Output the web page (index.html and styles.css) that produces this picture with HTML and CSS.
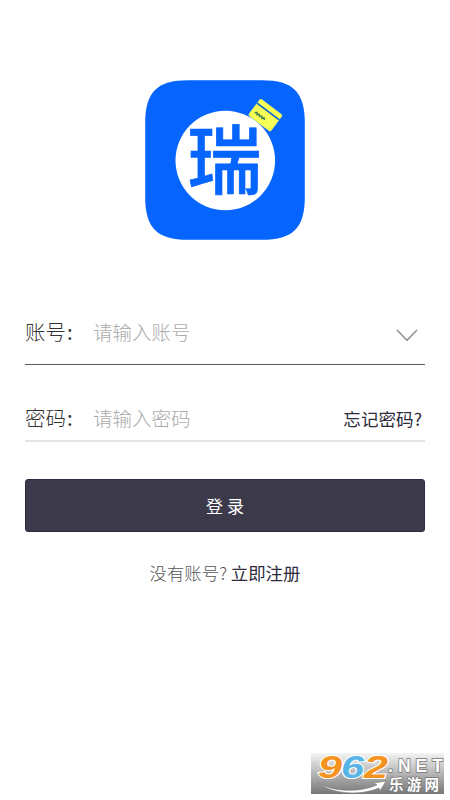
FILE: index.html
```
<!DOCTYPE html>
<html lang="zh-CN">
<head>
<meta charset="utf-8">
<title>登录</title>
<link rel="stylesheet" href="styles.css">
</head>
<body>
<main class="screen">
  <svg class="logo" viewBox="0 0 160 160" role="img" aria-label="瑞">
    <path class="logo-bg" d="M43 0.2H117C148 0.2 159.8 12 159.8 43V117C159.8 148 148 159.8 117 159.8H43C12 159.8 0.2 148 0.2 117V43C0.2 12 12 0.2 43 0.2Z"/>
    <circle cx="80.3" cy="80.5" r="49.8" fill="#fff"/>
    <g transform="translate(115.5 18.4) rotate(37)">
      <rect width="28" height="21" rx="2" fill="#f6ff55"/>
      <path d="M0 5.8H28" stroke="#0862d8" stroke-width="1.6"/>
      <path d="M4 15L5.6 13.4L7 15L8.6 13.4L10 15L11.6 13.4L13 15L14.6 13.4L16 15" fill="none" stroke="#43804e" stroke-width="1.5"/>
    </g>
    <text class="logo-text" x="79.6" y="107.5" text-anchor="middle">瑞</text>
  </svg>

  <form class="form">
    <div class="field field-account">
      <span class="label">账号<span class="colon">:</span></span>
      <span class="hint">请输入账号</span>
      <svg class="chevron" viewBox="0 0 22 13"><path d="M1 1L11 11.3L21 1"/></svg>
    </div>
    <div class="field field-password">
      <span class="label">密码<span class="colon">:</span></span>
      <span class="hint">请输入密码</span>
      <a class="forgot">忘记密码?</a>
    </div>
    <button class="submit" type="button">登 录</button>
    <p class="register">没有账号? <a class="register-link">立即注册</a></p>
  </form>

  <div class="badge">
    <svg viewBox="0 0 133 41">
      <defs>
        <linearGradient id="shade" x2="0" y2="1">
          <stop offset="0" stop-color="#f4f4f4"/>
          <stop offset="1" stop-color="#777"/>
        </linearGradient>
      </defs>
      <rect width="133" height="41" fill="url(#shade)"/>
      <path class="swoosh" d="M6 29C20 39 48 40 66 32L63 30L75 28L69 38L68 35C46 44 18 40 6 29Z"/>
      <g class="digits">
        <text x="7" y="25" textLength="24" lengthAdjust="spacingAndGlyphs" fill="#f59321">9</text>
        <text x="30" y="25" textLength="23" lengthAdjust="spacingAndGlyphs" fill="#58b5e8">6</text>
        <text x="53" y="25" textLength="24" lengthAdjust="spacingAndGlyphs" fill="#f59321">2</text>
      </g>
      <text class="net" x="77" y="18.7" textLength="55">.NET</text>
      <text class="site" x="78" y="36.8" textLength="50">乐游网</text>
    </svg>
  </div>
</main>
</body>
</html>
```
FILE: styles.css
```
* { box-sizing: border-box; }

body {
  margin: 0;
  background: #fff;
  font-family: "Noto Sans CJK SC", sans-serif;
}

.screen {
  position: relative;
  width: 450px;
  height: 800px;
  padding: 80px 25px 0;
  overflow: hidden;
}

.logo {
  display: block;
  width: 160px;
  height: 160px;
  margin: 0 auto;
}

.logo-bg { fill: #0665fe; }

.logo-text {
  font-size: 74.5px;
  font-weight: 500;
  fill: #0665fe;
  stroke: #0665fe;
  stroke-width: 0.7px;
}

.form { padding-top: 60px; }

.field {
  display: flex;
  align-items: center;
  white-space: nowrap;
}

.field-account {
  height: 65px;
  border-bottom: 1px solid #5a5867;
}

.field-password {
  height: 77px;
  padding-top: 31px;
  border-bottom: 2px solid #e4e4e6;
}

.label {
  width: 68px;
  padding-bottom: 2px;
  font-size: 20.5px;
  font-weight: 300;
  color: #333;
}

.colon {
  margin-left: 1px;
  font-weight: 400;
}

.hint {
  flex: 1;
  padding-bottom: 2px;
  font-size: 19.5px;
  font-weight: 300;
  color: #aaa;
}

.chevron {
  width: 22px;
  height: 13px;
  margin: 6px 7px 0 0;
  fill: none;
  stroke: #858585;
  stroke-width: 1.3;
}

.forgot {
  margin-right: 3px;
  font-size: 17.6px;
  color: #2d2b3b;
}

.submit {
  display: block;
  width: 400px;
  height: 53px;
  margin-top: 37px;
  padding: 0;
  border: 1px solid #2d2a40;
  border-radius: 3px;
  background: #3c394b;
  color: #fff;
  font: 400 17px "Noto Sans CJK SC", sans-serif;
}

.register {
  margin: 28px 0 0;
  font-size: 17.4px;
  line-height: 25px;
  font-weight: 300;
  text-align: center;
  color: #555;
}

.register-link {
  font-weight: 400;
  color: #2d2b3b;
}

.badge {
  position: absolute;
  left: 311px;
  top: 753px;
  width: 133px;
  height: 41px;
}

.badge svg { display: block; width: 133px; height: 41px; overflow: visible; }

.digits {
  font: italic 700 32px/1 "Liberation Sans", sans-serif;
  stroke: #fff;
  stroke-width: 2px;
  paint-order: stroke;
}

.swoosh { fill: #fff; stroke: #777; stroke-width: 0.6; }

.net, .site {
  fill: #fff;
  stroke: #777;
  stroke-width: 1.5px;
  paint-order: stroke;
}

.net { font: 700 17.5px/1 "Liberation Sans", sans-serif; }
.site { font: 700 14.5px/1 "Noto Sans CJK SC", sans-serif; }
```
